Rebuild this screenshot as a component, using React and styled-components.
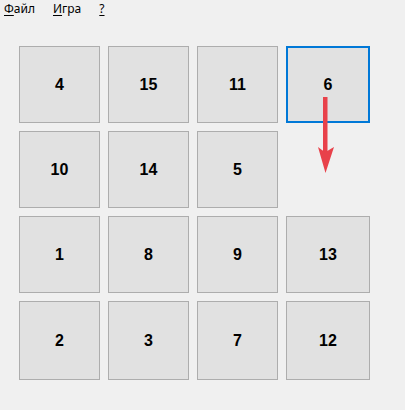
import React from "react";
import styled, { createGlobalStyle } from "styled-components";

const Global = createGlobalStyle`
  html, body { margin: 0; padding: 0; background: #f0f0f0; }
  body { width: 405px; height: 410px; overflow: hidden; }
`;

const Window = styled.div`
  width: 405px;
  height: 410px;
  background: #f0f0f0;
  display: flex;
  flex-direction: column;
`;

const MenuBar = styled.div`
  display: flex;
  height: 18px;
  align-items: center;
  padding-left: 4px;
  gap: 18px;
  font-family: "Noto Sans", "Open Sans", sans-serif;
  font-size: 12px;
  color: #000;
`;

const MenuItem = styled.span`
  line-height: 16px;
  & u { text-decoration: underline; text-underline-offset: 2px; }
`;

const Board = styled.div`
  position: relative;
  margin: 28px 0 0 19px;
  display: grid;
  grid-template-columns: 81px 81px 81px 84px;
  grid-template-rows: 77px 77px 77px 79px;
  gap: 8px;
`;

const Tile = styled.div`
  box-sizing: border-box;
  border: ${(p) => (p.$selected ? "2px solid #0078d7" : "1px solid #adadad")};
  background: #e1e1e1;
  display: flex;
  align-items: center;
  justify-content: center;
  font-family: "Liberation Sans", Arial, sans-serif;
  font-weight: bold;
  font-size: 16px;
  color: #000;
  visibility: ${(p) => (p.$empty ? "hidden" : "visible")};
`;

const Arrow = styled.svg`
  position: absolute;
  left: 299px;
  top: 51px;
  overflow: visible;
`;

const tiles = [4, 15, 11, 6, 10, 14, 5, 0, 1, 8, 9, 13, 2, 3, 7, 12];

export default function App() {
  return (
    <Window>
      <Global />
      <MenuBar>
        <MenuItem><u>Ф</u>айл</MenuItem>
        <MenuItem><u>И</u>гра</MenuItem>
        <MenuItem><u>?</u></MenuItem>
      </MenuBar>
      <Board>
        {tiles.map((n, i) => (
          <Tile key={i} $empty={n === 0} $selected={n === 6}>
            {n === 0 ? "" : n}
          </Tile>
        ))}
        <Arrow width="18" height="78" viewBox="0 0 18 78">
          <rect x="5" y="0" width="4.5" height="56" fill="#e8414a" />
          <path d="M0 50 Q5 54 7.2 55 Q9.5 54 16 50 L7.5 76 Z" fill="#e8414a" />
        </Arrow>
      </Board>
    </Window>
  );
}
